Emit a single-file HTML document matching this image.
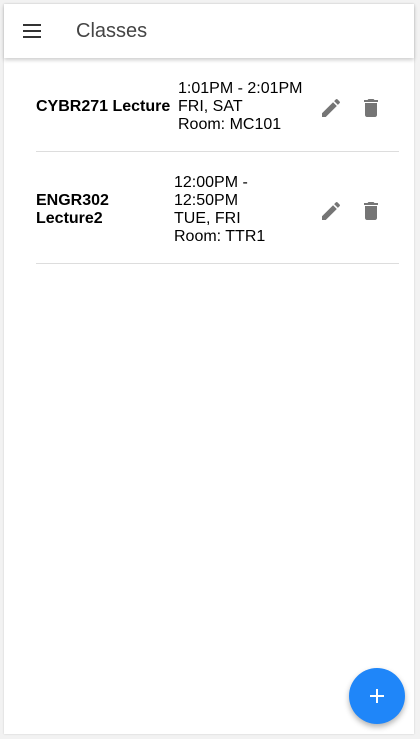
<html><head><style>
body{margin:0;width:420px;height:739px;background:#f2f2f2;font-family:"Liberation Sans",sans-serif;position:relative;overflow:hidden}
.card{position:absolute;left:4px;top:4px;width:410px;height:730px;background:#fff;box-shadow:0 0 2px rgba(0,0,0,.15)}
.hdr{position:absolute;left:0;top:0;width:410px;height:54px;background:#fff;box-shadow:0 2px 4px rgba(0,0,0,.2);z-index:2}
.title{position:absolute;left:72px;top:16px;font-size:20px;color:#444}
.t{position:absolute;font-size:16px;color:#000;line-height:18px}
.b{font-weight:bold}
.hr{position:absolute;left:36px;width:363px;height:1px;background:#ddd}
.fab{position:absolute;left:349px;top:668px;width:56px;height:56px;border-radius:50%;background:#1f86f9;box-shadow:0 3px 6px rgba(0,0,0,.3)}
</style></head><body>
<div class="card">
<div class="hdr">
<svg style="position:absolute;left:18px;top:19px" width="20" height="16"><path d="M1 2h18M1 8h18M1 14h18" stroke="#333" stroke-width="2"/></svg>
<div class="title">Classes</div>
</div>
</div>
<div class="t b" style="left:36px;top:98px">CYBR271 Lecture</div>
<div class="t" style="left:178px;top:80px">1:01PM - 2:01PM<br>FRI, SAT<br>Room: MC101</div>
<div class="hr" style="top:151px"></div>
<div class="t b" style="left:36px;top:192px">ENGR302<br>Lecture2</div>
<div class="t" style="left:174px;top:174px">12:00PM -<br>12:50PM<br>TUE, FRI<br>Room: TTR1</div>
<div class="hr" style="top:263px"></div>
<svg style="position:absolute;left:319px;top:96px" width="24" height="24" viewBox="0 0 24 24"><path fill="#757575" d="M3 17.25V21h3.75L17.81 9.94l-3.75-3.75L3 17.25zM20.71 7.04a1 1 0 000-1.41l-2.34-2.34a1 1 0 00-1.41 0l-1.83 1.83 3.75 3.75 1.83-1.83z"/></svg>
<svg style="position:absolute;left:359px;top:96px" width="24" height="24" viewBox="0 0 24 24"><path fill="#757575" d="M6 19c0 1.1.9 2 2 2h8c1.1 0 2-.9 2-2V7H6v12zM19 4h-3.5l-1-1h-5l-1 1H5v2h14V4z"/></svg>
<svg style="position:absolute;left:319px;top:199px" width="24" height="24" viewBox="0 0 24 24"><path fill="#757575" d="M3 17.25V21h3.75L17.81 9.94l-3.75-3.75L3 17.25zM20.71 7.04a1 1 0 000-1.41l-2.34-2.34a1 1 0 00-1.41 0l-1.83 1.83 3.75 3.75 1.83-1.83z"/></svg>
<svg style="position:absolute;left:359px;top:199px" width="24" height="24" viewBox="0 0 24 24"><path fill="#757575" d="M6 19c0 1.1.9 2 2 2h8c1.1 0 2-.9 2-2V7H6v12zM19 4h-3.5l-1-1h-5l-1 1H5v2h14V4z"/></svg>
<div class="fab"><svg style="position:absolute;left:18px;top:18px" width="20" height="20"><path d="M10 3v14M3 10h14" stroke="#fff" stroke-width="2"/></svg></div>
</body></html>
